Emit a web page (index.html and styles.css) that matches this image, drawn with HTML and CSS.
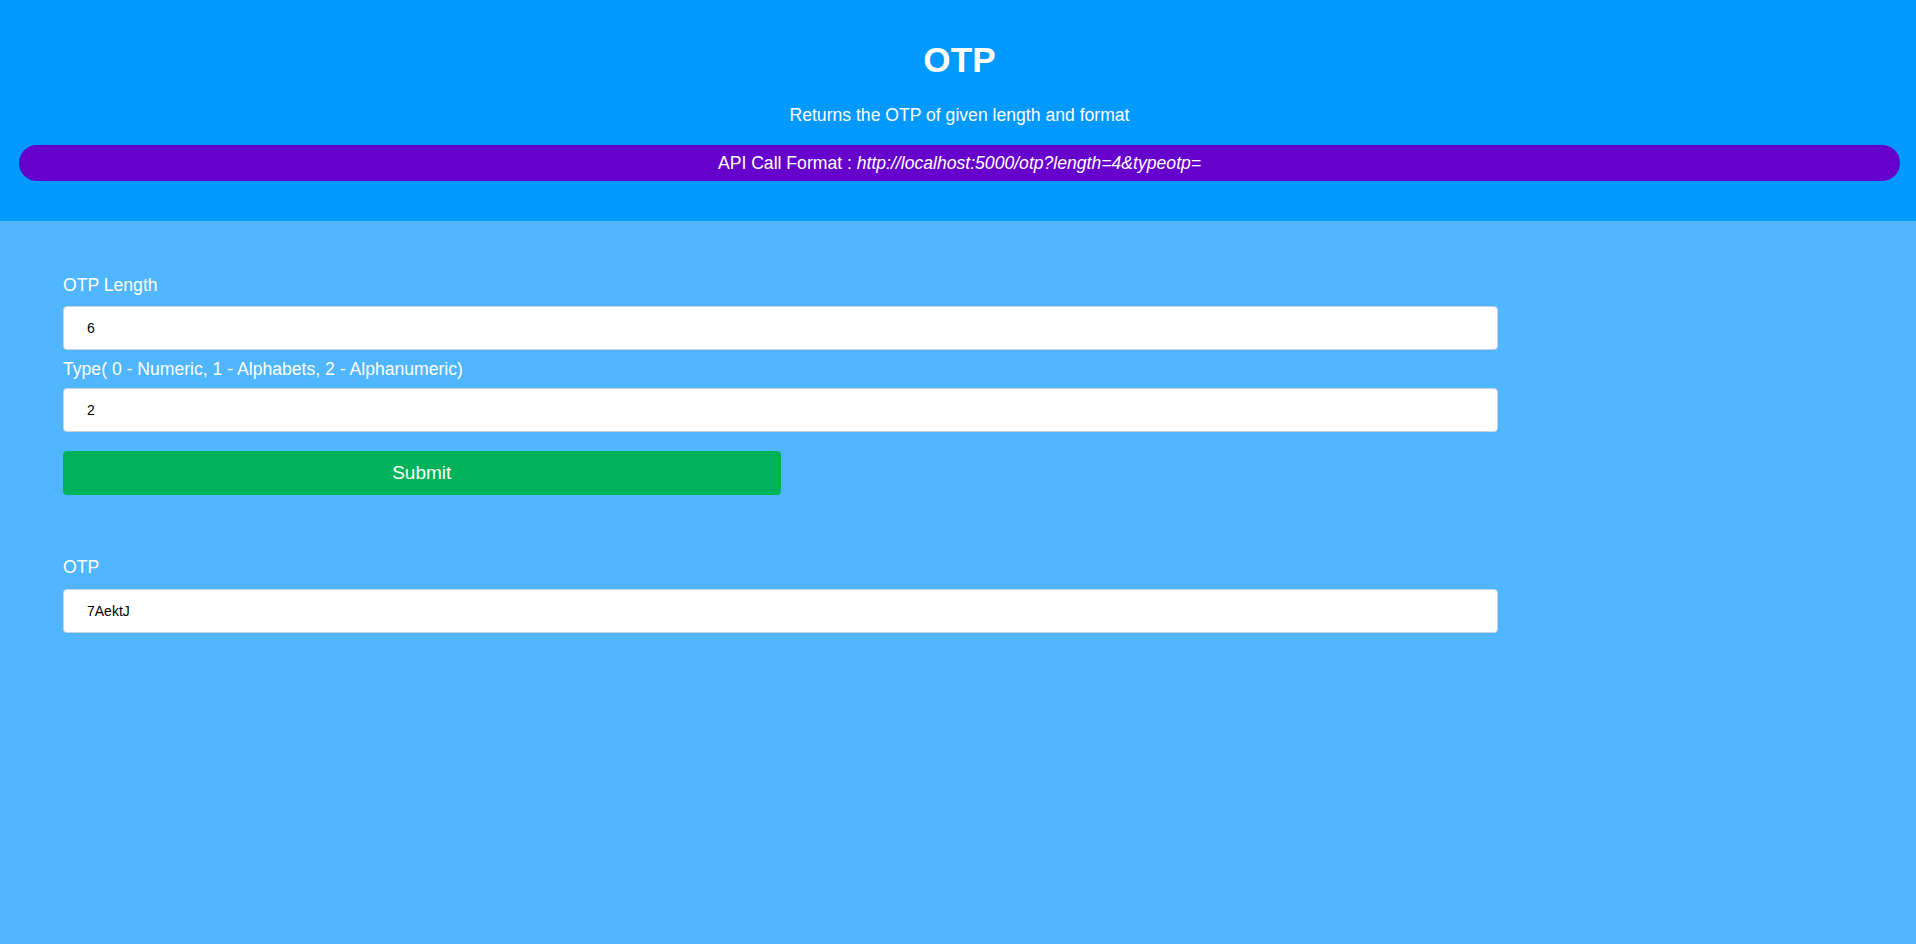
FILE: index.html
```html
<!DOCTYPE html>
<html>
<head>
<meta charset="utf-8">
<title>OTP</title>
<link rel="stylesheet" href="styles.css">
</head>
<body>
<header class="header">
  <h1 class="title">OTP</h1>
  <p class="subtitle">Returns the OTP of given length and format</p>
  <div class="api-pill">API Call Format : <em>http://localhost:5000/otp?length=4&amp;typeotp=</em></div>
</header>
<main class="main">
  <form class="form">
    <label class="label" for="len">OTP Length</label>
    <input class="input" id="len" type="text" value="6">
    <label class="label label-second" for="typ">Type( 0 - Numeric, 1 - Alphabets, 2 - Alphanumeric)</label>
    <input class="input" id="typ" type="text" value="2">
    <button class="submit" type="button">Submit</button>
  </form>
  <div class="result">
    <label class="label" for="otp">OTP</label>
    <input class="input" id="otp" type="text" value="7AektJ">
  </div>
</main>
</body>
</html>
```

FILE: styles.css
```css
html, body {
  margin: 0;
  padding: 0;
}
body {
  font-family: "Liberation Sans", Arial, sans-serif;
  font-size: 17.6px;
  color: #ffffff;
  background: #4fb6ff;
  min-height: 944px;
}
.header {
  background: #0099ff;
  height: 221px;
  box-sizing: border-box;
  padding: 40px 16px 0 19px;
  text-align: center;
}
.title {
  margin: 0;
  font-size: 35.2px;
  font-weight: bold;
  line-height: 40px;
}
.subtitle {
  margin: 25px 0 0 0;
  line-height: 20px;
}
.api-pill {
  margin-top: 20px;
  height: 36px;
  line-height: 36px;
  background: #6600cc;
  border-radius: 18px;
}
.api-pill em {
  font-style: italic;
}
.main {
  padding: 54px 63px 0 63px;
}
.form, .result {
  display: flex;
  flex-direction: column;
  align-items: flex-start;
  width: 1435px;
}
.label {
  display: block;
  line-height: 20px;
  margin-bottom: 11px;
}
.label-second {
  margin-top: 9px;
  margin-bottom: 9px;
}
.input {
  box-sizing: border-box;
  width: 100%;
  height: 44px;
  margin: 0;
  padding: 0 23px;
  border: 1px solid #c8d3dc;
  border-radius: 4px;
  background: #ffffff;
  font-family: "Liberation Sans", Arial, sans-serif;
  font-size: 14px;
  color: #000000;
  outline: none;
}
.submit {
  margin-top: 19px;
  width: 50%;
  height: 44px;
  border: none;
  border-radius: 4px;
  background: #00b35a;
  color: #ffffff;
  font-family: "Liberation Sans", Arial, sans-serif;
  font-size: 19px;
  cursor: pointer;
}
.result {
  margin-top: 62px;
}
.result .label {
  margin-bottom: 12px;
}
```
